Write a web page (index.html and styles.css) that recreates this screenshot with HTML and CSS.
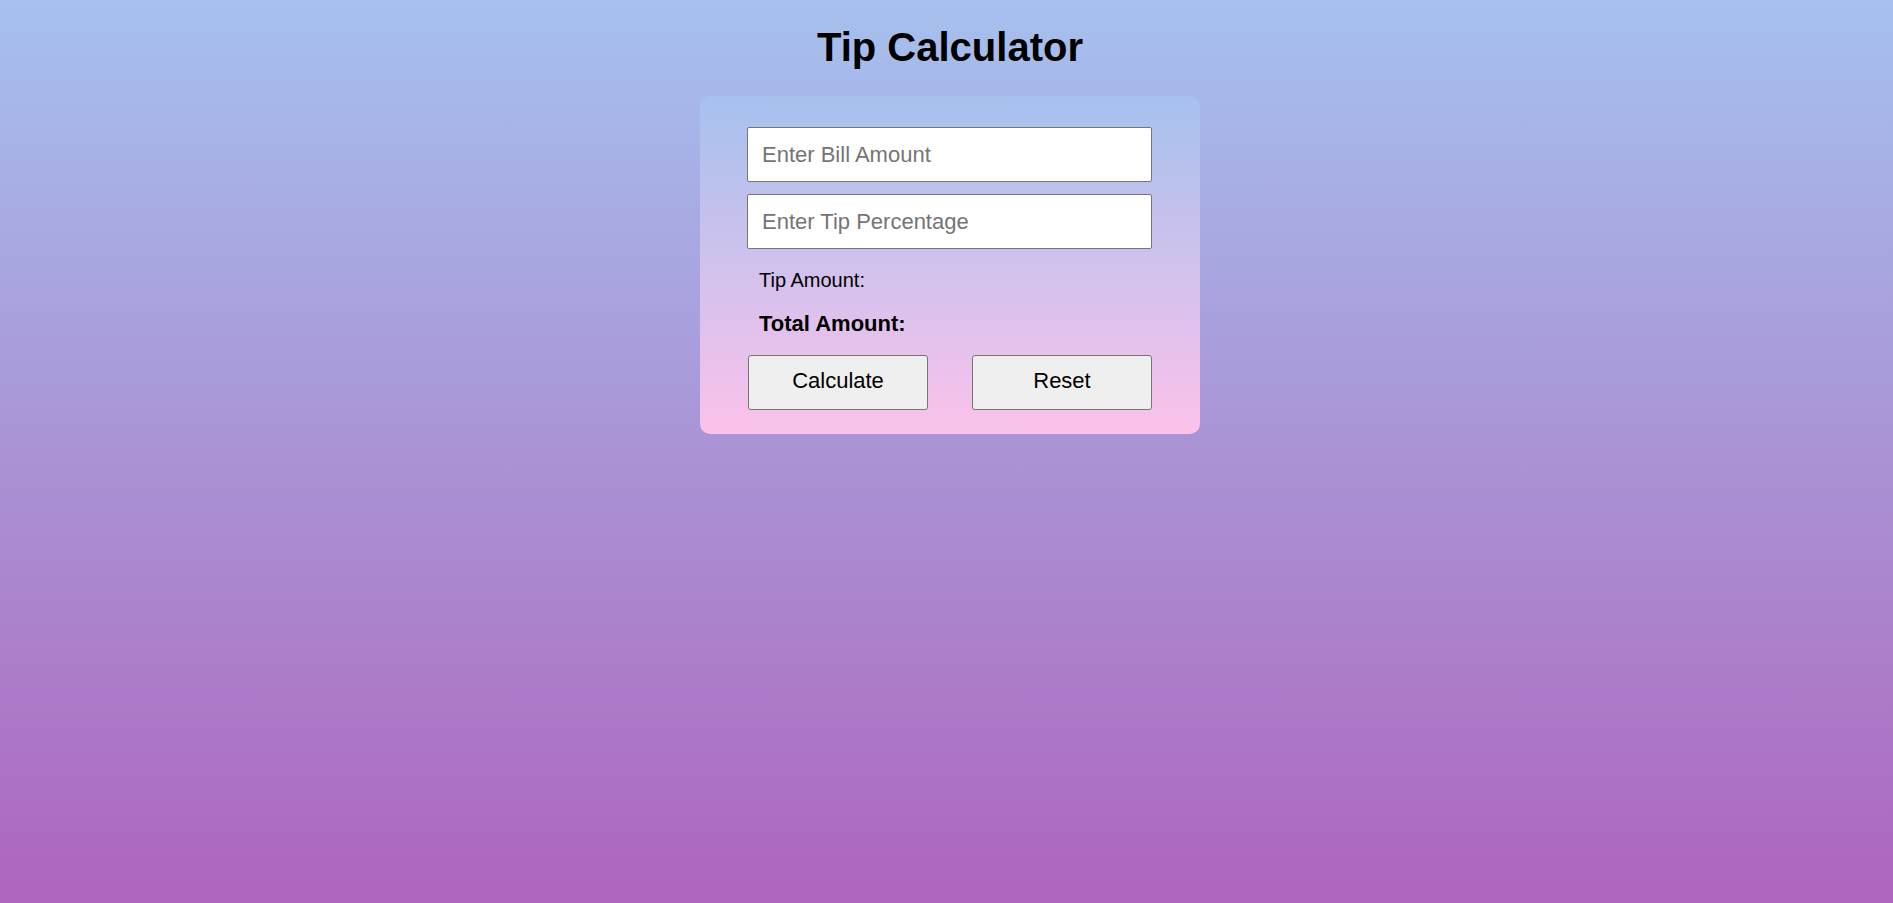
FILE: index.html
```html
<!DOCTYPE html>
<html lang="en">
<head>
<meta charset="utf-8">
<title>Tip Calculator</title>
<link rel="stylesheet" href="styles.css">
</head>
<body>
  <h1 class="title">Tip Calculator</h1>
  <div class="card">
    <input class="field" type="number" placeholder="Enter Bill Amount">
    <input class="field" type="number" placeholder="Enter Tip Percentage">
    <p class="tip">Tip Amount: <span class="tip-value"></span></p>
    <p class="total">Total Amount: <span class="total-value"></span></p>
    <div class="actions">
      <button class="btn" type="button">Calculate</button>
      <button class="btn" type="button">Reset</button>
    </div>
  </div>
</body>
</html>
```

FILE: styles.css
```css
html, body {
  height: 100%;
}
body {
  margin: 0;
  padding-left: 7px;
  box-sizing: border-box;
  font-family: "Liberation Sans", Arial, sans-serif;
  background: linear-gradient(to bottom, #a6c1ee 0%, #ae65bd 100%);
  min-height: 903px;
  display: flex;
  flex-direction: column;
  align-items: center;
}
.title {
  margin: 24px 0 26px;
  font-size: 40px;
  font-weight: bold;
  color: #000;
  line-height: 46px;
}
.card {
  box-sizing: border-box;
  width: 500px;
  height: 338px;
  padding: 31px 47px 0 47px;
  border-radius: 10px;
  background: linear-gradient(to bottom, #a6c1ee, #fbc2eb);
  display: flex;
  flex-direction: column;
}
.field {
  box-sizing: border-box;
  width: 405px;
  height: 55px;
  padding: 0 14px;
  margin: 0 0 12px 0;
  border: 1px solid #767676;
  border-radius: 2px;
  background: #fff;
  font-family: "Liberation Sans", Arial, sans-serif;
  font-size: 22px;
  color: #000;
  outline: none;
}
.field::placeholder {
  color: #757575;
}
.tip {
  margin: 8px 0 0 12px;
  font-size: 20px;
  line-height: 23px;
  color: #000;
}
.total {
  margin: 19px 0 0 12px;
  font-size: 22px;
  line-height: 25px;
  font-weight: bold;
  color: #000;
}
.actions {
  margin-top: 19px;
  width: 405px;
  padding-left: 1px;
  box-sizing: border-box;
  display: flex;
  justify-content: space-between;
}
.btn {
  box-sizing: border-box;
  width: 180px;
  height: 55px;
  padding: 0 0 3px 0;
  border: 1px solid #767676;
  border-radius: 3px;
  background: #efefef;
  font-family: "Liberation Sans", Arial, sans-serif;
  font-size: 22px;
  color: #000;
}
```
